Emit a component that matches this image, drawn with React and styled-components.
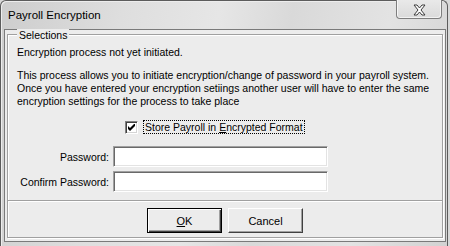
import React from "react";
import styled, { createGlobalStyle } from "styled-components";

const GlobalStyle = createGlobalStyle`
  html, body {
    margin: 0;
    padding: 0;
    background: #d8d8d8;
  }
  body {
    width: 450px;
    height: 246px;
    overflow: hidden;
    font-family: "Liberation Sans", Arial, sans-serif;
  }
`;

const Window = styled.div`
  box-sizing: border-box;
  width: 448px;
  height: 246px;
  border: 1px solid #5c5c5c;
  border-bottom: none;
  border-radius: 6px 6px 0 0;
  background: linear-gradient(100deg, #cdcdcd 0%, #dedede 25%, #e6e6e6 45%, #d9d9d9 60%, #e3e3e3 80%, #d2d2d2 100%);
  box-shadow: inset 1px 1px 0 #ededed;
  display: flex;
  flex-direction: column;
`;

const TitleBar = styled.div`
  height: 28px;
  display: flex;
  align-items: flex-start;
  justify-content: space-between;
  padding-left: 7px;
`;

const Title = styled.div`
  line-height: 28px;
  font-size: 11.5px;
  color: #000;
`;

const CloseButton = styled.div`
  box-sizing: border-box;
  margin-top: -1px;
  margin-right: 5px;
  width: 46px;
  height: 19px;
  border: 1px solid #7e7e7e;
  border-top: none;
  border-radius: 0 0 4px 4px;
  background: linear-gradient(#e9e9e9, #dadada);
  box-shadow: inset 1px 0 0 #f6f6f6, inset -1px -1px 0 #f2f2f2;
  display: flex;
  align-items: center;
  justify-content: center;
  padding-top: 1px;
`;

const Client = styled.div`
  box-sizing: border-box;
  margin: 0 1px 0 3px;
  height: 213px;
  border: 1px solid #7a7a7a;
  background: #ececec;
  padding: 4px 2px 3px 2px;
  display: flex;
  flex-direction: column;
  font-size: 10.5px;
  color: #000;
`;

const GroupBox = styled.div`
  position: relative;
  flex: 1;
  border: 1px solid #a0a0a0;
  box-shadow: inset 1px 1px 0 #fff, 1px 1px 0 #fff;
  display: flex;
  flex-direction: column;
`;

const Caption = styled.span`
  position: absolute;
  top: -6px;
  left: 9px;
  padding: 0 2px;
  line-height: 13px;
  background: #ececec;
`;

const Body = styled.div`
  padding: 11px 9px 8px 9px;
  display: flex;
  flex-direction: column;
`;

const Line = styled.div`
  line-height: 13px;
  white-space: nowrap;
  margin-top: ${(p) => p.$mt || 0}px;
`;

const CheckRow = styled.div`
  margin-top: 12px;
  margin-left: 108px;
  display: flex;
  align-items: center;
  gap: 5px;
`;

const CheckBox = styled.div`
  box-sizing: border-box;
  width: 13px;
  height: 13px;
  border: 1px solid;
  border-color: #808080 #fff #fff #808080;
  box-shadow: inset 1px 1px 0 #404040, inset -1px -1px 0 #d4d4d4;
  background: #fff;
  display: flex;
  align-items: center;
  justify-content: center;
`;

const CheckLabel = styled.span`
  border: 1px dotted #000;
  padding: 0 1px;
  line-height: 12px;
  white-space: nowrap;
`;

const FieldGrid = styled.div`
  margin-top: 12px;
  display: grid;
  grid-template-columns: 92px 215px;
  column-gap: 4px;
  row-gap: 4px;
  align-items: center;
`;

const FieldLabel = styled.span`
  text-align: right;
  white-space: nowrap;
`;

const TextBox = styled.div`
  box-sizing: border-box;
  height: 21px;
  border: 1px solid;
  border-color: #a0a0a0 #fff #fff #a0a0a0;
  box-shadow: inset 1px 1px 0 #696969, inset -1px -1px 0 #e3e3e3;
  background: #fff;
`;

const Separator = styled.div`
  height: 0;
  border-top: 1px solid #a0a0a0;
  border-bottom: 1px solid #fff;
`;

const ButtonBar = styled.div`
  flex: 1;
  padding: 6px 0 4px;
  display: flex;
  justify-content: center;
  align-items: flex-start;
  gap: 6px;
`;

const Button = styled.div`
  box-sizing: border-box;
  width: 75px;
  height: 25px;
  background: #ececec;
  display: flex;
  align-items: center;
  justify-content: center;
  font-size: 11px;
  border: 1px solid;
  border-color: ${(p) => (p.$default ? "#000" : "#fff #404040 #404040 #fff")};
  box-shadow: ${(p) =>
    p.$default
      ? "inset 1px 1px 0 #fff, inset -1px -1px 0 #404040, inset -2px -2px 0 #a0a0a0"
      : "inset -1px -1px 0 #a0a0a0"};
`;

const Key = styled.span`
  text-decoration: underline;
`;

function CloseGlyph() {
  return (
    <svg width="13" height="12" viewBox="0 0 13 12">
      <polygon
        points="1,1 4,1 6.5,4 9,1 12,1 8,6 12,11 9,11 6.5,8 4,11 1,11 5,6"
        fill="#fff"
        stroke="#3c3c3c"
        strokeWidth="1"
        strokeLinejoin="round"
      />
    </svg>
  );
}

function CheckMark() {
  return (
    <svg width="7" height="7" viewBox="0 0 7 7">
      <path d="M0 2 L2 4 L7 -1 L7 2 L2 7 L0 5 Z" fill="#000" />
    </svg>
  );
}

export default function App() {
  return (
    <>
      <GlobalStyle />
      <Window>
        <TitleBar>
          <Title>Payroll Encryption</Title>
          <CloseButton>
            <CloseGlyph />
          </CloseButton>
        </TitleBar>
        <Client>
          <GroupBox>
            <Caption>Selections</Caption>
            <Body>
              <Line>Encryption process not yet initiated.</Line>
              <Line $mt={10}>
                This process allows you to initiate encryption/change of password in your payroll system.
              </Line>
              <Line>
                Once you have entered your encryption setiings another user will have to enter the same
              </Line>
              <Line>encryption settings for the process to take place</Line>
              <CheckRow>
                <CheckBox>
                  <CheckMark />
                </CheckBox>
                <CheckLabel>
                  Store Payroll in <Key>E</Key>ncrypted Format
                </CheckLabel>
              </CheckRow>
              <FieldGrid>
                <FieldLabel>Password:</FieldLabel>
                <TextBox />
                <FieldLabel>Confirm Password:</FieldLabel>
                <TextBox />
              </FieldGrid>
            </Body>
            <Separator />
            <ButtonBar>
              <Button $default>
                <span>
                  <Key>O</Key>K
                </span>
              </Button>
              <Button>Cancel</Button>
            </ButtonBar>
          </GroupBox>
        </Client>
      </Window>
    </>
  );
}
